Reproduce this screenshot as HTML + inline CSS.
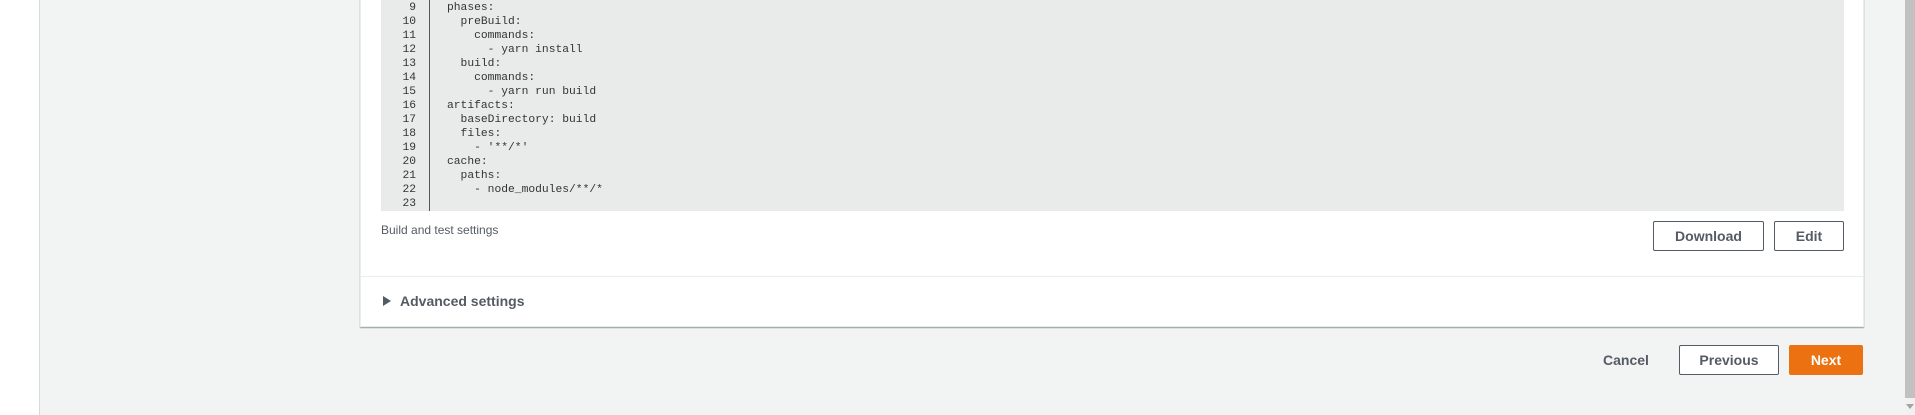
<!DOCTYPE html>
<html><head><style>
*{margin:0;padding:0;box-sizing:border-box}
body{width:1915px;height:415px;overflow:hidden;background:#f2f3f3;font-family:"Liberation Sans",sans-serif;position:relative;color:#16191f}
.left{position:absolute;left:0;top:0;width:40px;height:415px;background:#fff;border-right:1px solid #d5dbdb}
.card{position:absolute;left:360px;top:-2px;width:1504px;height:329px;background:#fff;border:1px solid #eaeded;box-shadow:0 1px 1px rgba(0,28,36,.4)}
.code{position:absolute;left:20px;top:0;width:1463px;height:212px;background:#e9ebeb;font-family:"Liberation Mono",monospace;font-size:11.3px;color:#444}
.ln{position:absolute;left:0;top:2px;width:35px;text-align:right;color:#333}
.gut{position:absolute;left:48px;top:0;width:1px;height:212px;background:#555}
.src{position:absolute;left:66px;top:2px;white-space:pre;color:#333}
.l{height:14px;line-height:14px}
.lbl{position:absolute;left:20px;top:224px;font-size:12px;color:#545b64}
.btn{position:absolute;height:30px;border:1px solid #545b64;border-radius:2px;background:#fff;font-weight:bold;font-size:14px;color:#545b64;text-align:center;line-height:28px}
.div{position:absolute;left:0;top:277px;width:100%;height:1px;background:#eaeded}
.adv{position:absolute;left:39px;top:294px;font-weight:bold;font-size:14px;color:#545b64}
.tri{position:absolute;left:22px;top:297px;width:0;height:0;border-left:8px solid #545b64;border-top:5px solid transparent;border-bottom:5px solid transparent}
.sb{position:absolute;left:1905px;top:0;width:10px;height:415px;background:#f1f1f1}
.thumb{position:absolute;left:1905px;top:0;width:10px;height:398px;background:#c1c1c1}
</style></head><body>
<div class="left"></div>
<div class="card">
<div class="code">
<div class="ln"><div class="l">9</div><div class="l">10</div><div class="l">11</div><div class="l">12</div><div class="l">13</div><div class="l">14</div><div class="l">15</div><div class="l">16</div><div class="l">17</div><div class="l">18</div><div class="l">19</div><div class="l">20</div><div class="l">21</div><div class="l">22</div><div class="l">23</div></div>
<div class="gut"></div>
<div class="src"><div class="l">phases:</div><div class="l">  preBuild:</div><div class="l">    commands:</div><div class="l">      - yarn install</div><div class="l">  build:</div><div class="l">    commands:</div><div class="l">      - yarn run build</div><div class="l">artifacts:</div><div class="l">  baseDirectory: build</div><div class="l">  files:</div><div class="l">    - '**/*'</div><div class="l">cache:</div><div class="l">  paths:</div><div class="l">    - node_modules/**/*</div><div class="l"> </div></div>
</div>
<div class="lbl">Build and test settings</div>
<div class="btn" style="left:1292px;top:222px;width:111px">Download</div>
<div class="btn" style="left:1413px;top:222px;width:70px">Edit</div>
<div class="div"></div>
<div class="tri"></div>
<div class="adv">Advanced settings</div>
</div>
<div style="position:absolute;left:1603px;top:352px;font-weight:bold;font-size:14px;color:#545b64">Cancel</div>
<div class="btn" style="left:1679px;top:345px;width:100px">Previous</div>
<div class="btn" style="left:1789px;top:345px;width:74px;background:#ec7211;border-color:#ec7211;color:#fff">Next</div>
<div class="sb"></div><div class="thumb"></div>
<div style="position:absolute;left:1906px;top:404px;border-top:5px solid #a3a3a3;border-left:4px solid transparent;border-right:4px solid transparent"></div>
</body></html>
